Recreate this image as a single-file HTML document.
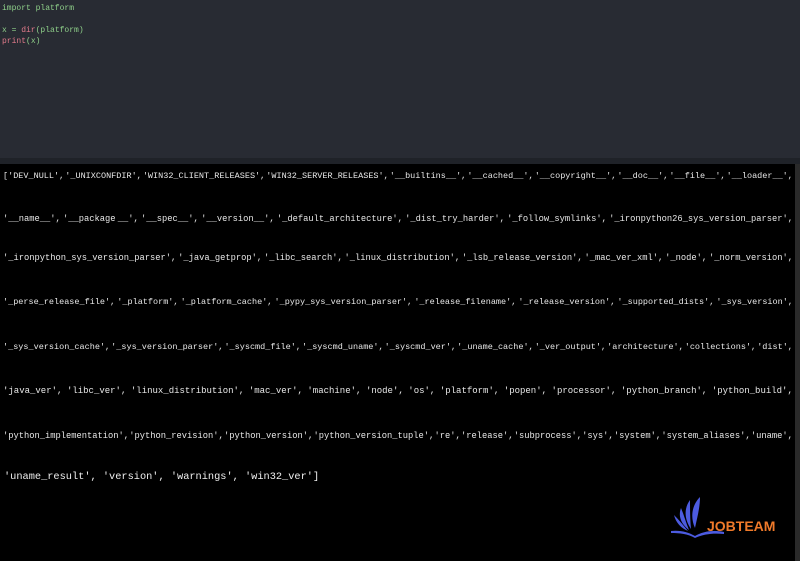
<!DOCTYPE html>
<html><head><meta charset="utf-8"><style>
html,body{margin:0;padding:0;width:800px;height:561px;overflow:hidden;background:#000;}
.ed{position:absolute;left:0;top:0;width:800px;height:158px;background:#282b33;}
.bar{position:absolute;left:0;top:158px;width:800px;height:6px;background:#1f2228;}
.code{position:absolute;left:2px;top:3px;font:8px/11px "Liberation Mono",monospace;color:#8fd08a;white-space:pre;}
.k{color:#e07a8a}
.sb{position:absolute;right:0;top:164px;width:5px;height:397px;background:#2a2a2a;}
.l{position:absolute;left:3px;width:790px;font:9px "Liberation Mono",monospace;color:#e8e8e8;white-space:nowrap;display:flex;justify-content:space-between;}
.last{position:absolute;left:4px;top:471px;font:10.3px "Liberation Mono",monospace;color:#f0f0f0;white-space:pre;}
.logo{position:absolute;left:668px;top:495px;}
.jt{position:absolute;left:707px;top:518px;font:bold 14px "Liberation Sans",sans-serif;color:#f07a2a;}
</style></head><body>
<div class="ed"><div class="code">import platform

x = <span class="k">dir</span>(platform)
<span class="k">print</span>(x)</div></div>
<div class="bar"></div>
<div class="sb"></div>
<div class="l" style="top:171px">['DEV_NULL', '_UNIXCONFDIR', 'WIN32_CLIENT_RELEASES', 'WIN32_SERVER_RELEASES', '__builtins__', '__cached__', '__copyright__', '__doc__', '__file__', '__loader__',</div>
<div class="l" style="top:214px">'__name__', '__package __', '__spec__', '__version__', '_default_architecture', '_dist_try_harder', '_follow_symlinks', '_ironpython26_sys_version_parser',</div>
<div class="l" style="top:253px">'_ironpython_sys_version_parser', '_java_getprop', '_libc_search', '_linux_distribution', '_lsb_release_version', '_mac_ver_xml', '_node', '_norm_version',</div>
<div class="l" style="top:297px">'_perse_release_file', '_platform', '_platform_cache', '_pypy_sys_version_parser', '_release_filename', '_release_version', '_supported_dists', '_sys_version',</div>
<div class="l" style="top:342px">'_sys_version_cache', '_sys_version_parser', '_syscmd_file', '_syscmd_uname', '_syscmd_ver', '_uname_cache', '_ver_output', 'architecture', 'collections', 'dist',</div>
<div class="l" style="top:386px">'java_ver', 'libc_ver', 'linux_distribution', 'mac_ver', 'machine', 'node', 'os', 'platform', 'popen', 'processor', 'python_branch', 'python_build',</div>
<div class="l" style="top:431px">'python_implementation', 'python_revision', 'python_version', 'python_version_tuple', 're', 'release', 'subprocess', 'sys', 'system', 'system_aliases', 'uname',</div>
<div class="last">'uname_result', 'version', 'warnings', 'win32_ver']</div>
<svg class="logo" width="64" height="46" viewBox="0 0 64 46">
<g fill="#4c5be0">
<path d="M32 2 C24 10 22 22 27 33 C29 23 32 13 32 2Z"/>
<path d="M22 5 C16 13 16 24 23 34 C22 24 22 14 22 5Z"/>
<path d="M13 13 C10 21 13 29 21 35 C18 28 16 20 13 13Z"/>
<path d="M6 20 C8 28 13 33 20 36 C15 30 11 25 6 20Z"/>
<path d="M3 36 C12 35 20 37 27 41 C36 36 45 35 56 37 L56 39 C45 38 36 39 27 43 C20 39 12 38 3 38Z"/>
</g></svg>
<div class="jt">JOBTEAM</div>
<script>
document.querySelectorAll('.l').forEach(function(el){
  var t=el.textContent.trim().split(' ');
  el.innerHTML='';
  t.forEach(function(w){var s=document.createElement('span');s.textContent=w;el.appendChild(s);});
  var fs=9;
  while(el.scrollWidth>790 && fs>5){fs-=0.25;el.style.fontSize=fs+'px';}
});
</script>
</body></html>
